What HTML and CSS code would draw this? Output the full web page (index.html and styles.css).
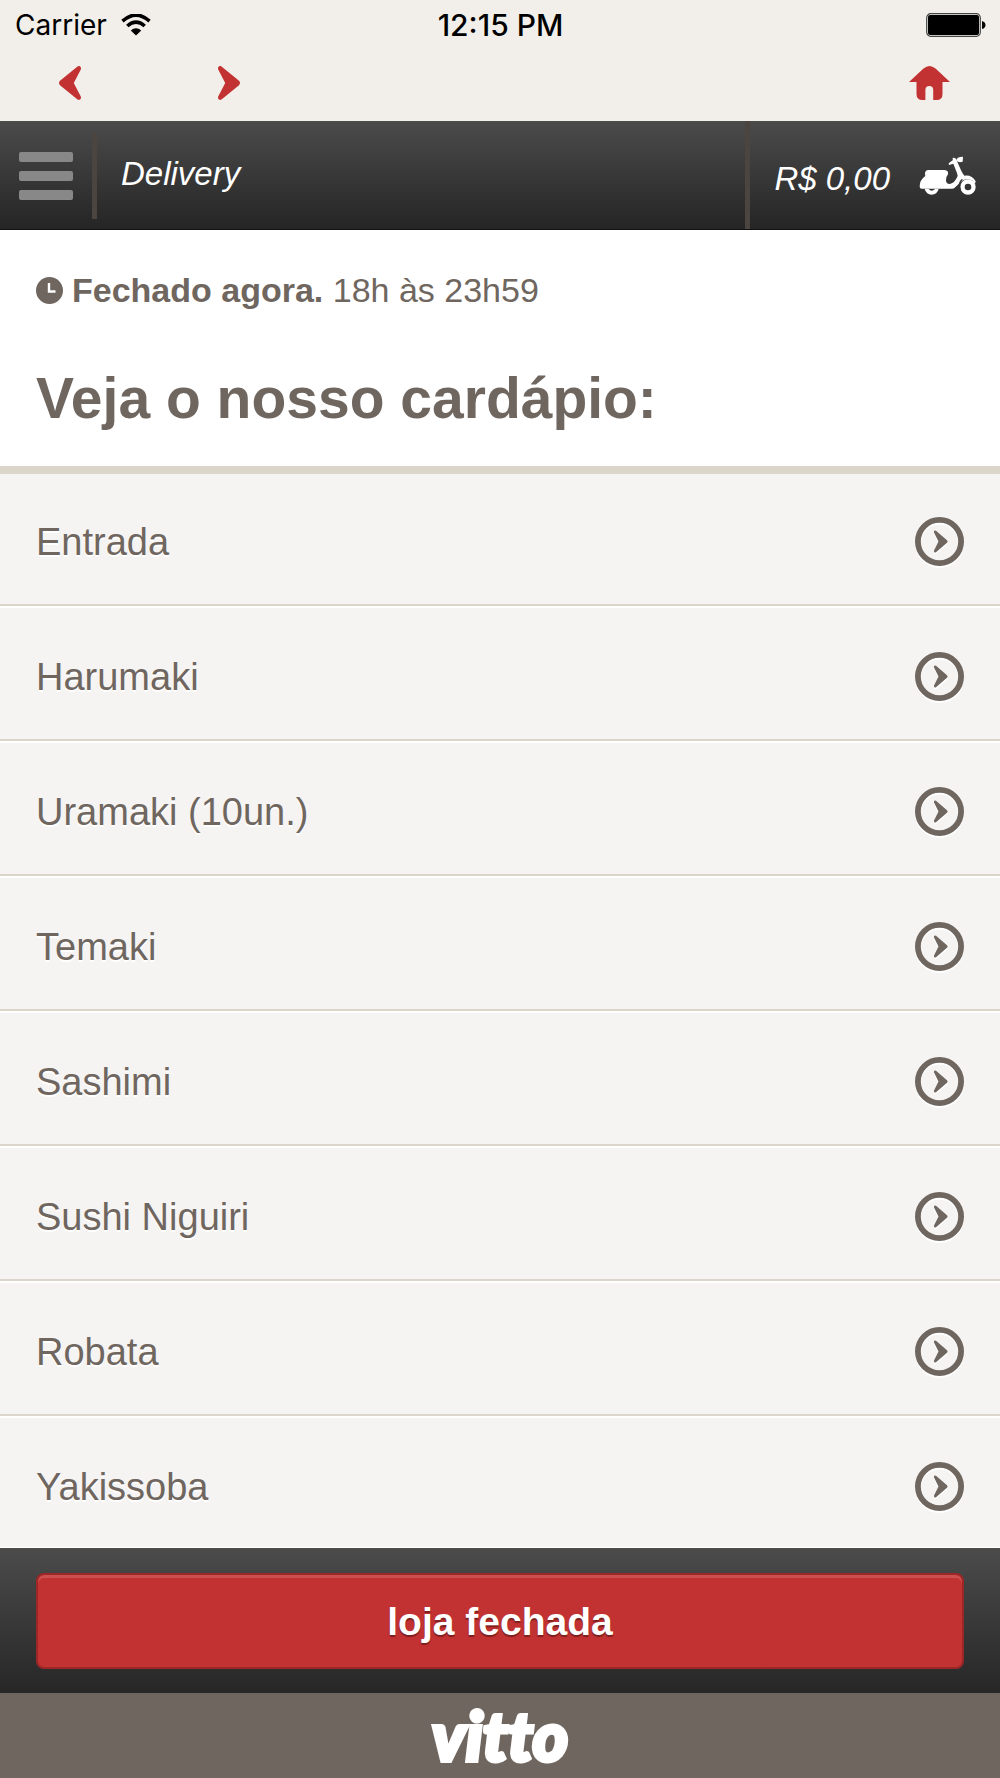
FILE: index.html
```html
<!DOCTYPE html>
<html lang="pt-BR">
<head>
  <meta charset="UTF-8">
  <meta name="viewport" content="width=device-width, initial-scale=1.0">
  <title>Delivery</title>
  <link rel="stylesheet" href="styles.css">
</head>
<body>

<!-- shared shapes -->
<svg class="sprite" aria-hidden="true">
  <symbol id="go" viewBox="0 0 49 49">
    <circle cx="24.5" cy="24.5" r="21.6" fill="none" stroke="currentColor" stroke-width="5.8"/>
    <path d="M19 15.500Q18.500 12.800 21 13.800L32 23.2Q33.300 24.5 32 25.8L21 35.200Q18.500 36.200 19 33.500L23.500 24.5Z" fill="currentColor"/>
  </symbol>
  <symbol id="arrow" viewBox="0 0 22 34">
    <path d="M.2 3.500C-.5 1 1.200-.8 3.500.6L21 14.800Q23 17 21 19.200L3.500 33.400C1.200 34.800-.5 33 .2 30.500L7.200 17Z" fill="currentColor"/>
  </symbol>
</svg>

<div class="status-bar">
  <div class="carrier">
    <span>Carrier</span>
    <svg width="30" height="22" viewBox="0 0 30 22">
      <path d="M1.5 7.2Q15-5 28.5 7.2" fill="none" stroke="#000" stroke-width="3.6"/>
      <path d="M6.3 12Q15 4.4 23.7 12" fill="none" stroke="#000" stroke-width="3.6"/>
      <path d="M15 21.5L9.8 16.4Q15 12 20.2 16.4Z"/>
    </svg>
  </div>
  <time class="clock">12:15 PM</time>
  <svg class="battery" width="60" height="24" viewBox="0 0 60 24">
    <rect x=".7" y=".7" width="53.6" height="22.6" rx="4" fill="none" stroke="#444" stroke-width="1.2"/>
    <rect x="2" y="2" width="51" height="20" rx="2"/>
    <path d="M56 8Q59.500 9 59.500 12T56 16Z"/>
  </svg>
</div>

<nav class="nav-bar">
  <button class="nav-button back" aria-label="Voltar"><svg width="22" height="34"><use href="#arrow"/></svg></button>
  <button class="nav-button next" aria-label="Avançar"><svg width="22" height="34"><use href="#arrow"/></svg></button>
  <button class="nav-button home" aria-label="Início">
    <svg width="41" height="34" viewBox="0 0 41 34">
      <path d="M0 16L14.500 2.500Q20.500-2.500 26.500 2.500L41 16H33.500V28Q33.500 34 27.500 34H24.200V24Q24.200 20 20.300 20T16.400 24V34H13.500Q7.500 34 7.500 28V16Z" fill="currentColor"/>
    </svg>
  </button>
</nav>

<header class="top-bar">
  <button class="menu-button" aria-label="Menu"><span></span><span></span><span></span></button>
  <h1 class="page-name">Delivery</h1>
  <a href="#" class="cart">
    <span>R$ 0,00</span>
    <svg width="57" height="39" viewBox="0 0 171 117" fill="currentColor">
      <path d="M2 91Q2 72 19 60Q15 45 26 42H77Q89 43 87 55Q82 60 81 73Q81 84 92 84Q105 82 113 66Q118 59 114 51L103 23L90 27Q87 23 91 20L102 12Q98 4 105 5L111 8L126 43Q129 50 136 59Q158 55 170 76L168 83L159 73Q139 65 128 76L107 95Q104 98 99 98H7Q2 98 2 91Z"/>
      <path d="M112 14Q112 2 132 2L131 17Q119 21 112 14Z"/>
      <path fill-rule="evenodd" d="M147 70A23 23 0 1 0 147 116A23 23 0 1 0 147 70ZM147 83A10 10 0 1 1 147 103A10 10 0 1 1 147 83Z"/>
      <path d="M17 99H29Q38 109 48 99H59Q54 116 38 116T17 99Z"/>
      <path d="M124 101Q116 82 130 70" fill="none" stroke="#333" stroke-width="4"/>
    </svg>
  </a>
</header>

<main>
  <section class="intro">
    <p class="hours">
      <svg width="27" height="27" viewBox="0 0 27 27">
        <circle cx="13.500" cy="13.500" r="13.500" fill="currentColor"/>
        <path d="M13 6V14.500H19.500" fill="none" stroke="#fff" stroke-width="2.400"/>
      </svg>
      <span><strong>Fechado agora.</strong> 18h às 23h59</span>
    </p>
    <h2>Veja o nosso cardápio:</h2>
  </section>

  <ul class="menu-list">
    <li><a href="#">Entrada <svg width="49" height="49"><use href="#go"/></svg></a></li>
    <li><a href="#">Harumaki <svg width="49" height="49"><use href="#go"/></svg></a></li>
    <li><a href="#">Uramaki (10un.) <svg width="49" height="49"><use href="#go"/></svg></a></li>
    <li><a href="#">Temaki <svg width="49" height="49"><use href="#go"/></svg></a></li>
    <li><a href="#">Sashimi <svg width="49" height="49"><use href="#go"/></svg></a></li>
    <li><a href="#">Sushi Niguiri <svg width="49" height="49"><use href="#go"/></svg></a></li>
    <li><a href="#">Robata <svg width="49" height="49"><use href="#go"/></svg></a></li>
    <li><a href="#">Yakissoba <svg width="49" height="49"><use href="#go"/></svg></a></li>
  </ul>
</main>

<div class="action-bar">
  <button class="store-button">loja fechada</button>
</div>

<footer class="footer">
  <a href="#" class="logo">vitto</a>
</footer>

</body>
</html>
```
FILE: styles.css
```css
* {
  box-sizing: border-box;
}

body {
  margin: 0;
  min-height: 100vh;
  display: flex;
  flex-direction: column;
  font-family: "Liberation Sans", Arial, sans-serif;
  color: #6f6660;
  background: #fff;
}

a {
  color: inherit;
  text-decoration: none;
}

button {
  border: none;
  padding: 0;
  background: none;
  font-family: inherit;
  cursor: pointer;
}

svg {
  display: block;
  flex: none;
}

.sprite {
  position: absolute;
  width: 0;
  height: 0;
}

/* status bar */
.status-bar {
  display: grid;
  grid-template-columns: 1fr auto 1fr;
  align-items: center;
  height: 50px;
  padding: 0 14px 0 15px;
  background: #f2efea;
  color: #000;
  font-family: Inter, sans-serif;
  font-size: 28px;
}

.carrier {
  display: flex;
  align-items: center;
  gap: 14px;
}

.clock {
  font-size: 30px;
  font-weight: 500;
}

.battery {
  justify-self: end;
}

/* back, next, home */
.nav-bar {
  display: flex;
  align-items: center;
  height: 71px;
  padding: 0 50px 6px 59px;
  background: #f2efea;
}

.nav-button {
  color: #c33232;
}

.back svg {
  transform: rotate(180deg);
}

.next {
  margin-left: 137px;
}

.home {
  margin-left: auto;
}

/* dark header */
.top-bar {
  display: flex;
  align-items: center;
  height: 109px;
  padding: 0 24px 0 19px;
  background: linear-gradient(#4b4b4b, #252525);
  border-bottom: 1px solid #111;
  color: #fff;
  font-size: 33px;
  font-style: italic;
}

.menu-button {
  display: flex;
  flex-direction: column;
  gap: 9px;
  width: 54px;
  padding-top: 2px;
}

.menu-button span {
  height: 10px;
  border-radius: 2px;
  background: #888;
}

.page-name {
  flex: 1;
  height: 86px;
  margin: 2px 0 0 19px;
  padding-left: 24px;
  border-left: 5px solid #4b4541;
  font-size: 33px;
  font-weight: normal;
  line-height: 82px;
}

.cart {
  display: flex;
  align-items: center;
  gap: 29px;
  height: 100%;
  padding-left: 24px;
  border-left: 5px solid #4b4541;
}

.cart span {
  padding-top: 8px;
}

/* opening hours and title */
.intro {
  padding: 40px 36px 36px;
  border-bottom: 8px solid #dbd5ca;
  background: #fff;
}

.hours {
  display: flex;
  align-items: center;
  gap: 9px;
  margin: 0;
  font-size: 34px;
  line-height: 40px;
}

.intro h2 {
  margin: 56px 0 0;
  font-size: 57px;
  line-height: 64px;
}

/* categories */
main {
  flex: 1;
  background: #f5f4f2;
}

.menu-list {
  margin: 0;
  padding: 0;
  list-style: none;
}

.menu-list a {
  display: flex;
  align-items: center;
  justify-content: space-between;
  padding: 44px 36px 38px;
  border-top: 2px solid #fff;
  border-bottom: 2px solid #dbd5ca;
  font-size: 38px;
  line-height: 48px;
  text-shadow: 0 2px 0 #fff;
}

.menu-list li:first-child a {
  padding-top: 43px;
  border-top: none;
}

.menu-list li:last-child a {
  padding-bottom: 36px;
  border-bottom: 1px solid #fff;
}

.menu-list svg {
  filter: drop-shadow(0 2px 0 #fff);
}

/* store status button */
.action-bar {
  padding: 25px 36px 24px;
  background: linear-gradient(#4b4b4b, #272727);
}

.store-button {
  display: block;
  width: 100%;
  height: 96px;
  padding-top: 2px;
  border: 2px solid #9d2626;
  border-radius: 8px;
  background: #c33232;
  box-shadow: inset 0 3px 0 #cd5050;
  color: #fff;
  font-size: 39px;
  font-weight: bold;
  text-shadow: 0 2px 1px #7d1f1f;
}

.footer {
  display: flex;
  justify-content: center;
  height: 85px;
  background: #6f6660;
}

.logo {
  color: #fff;
  font-family: Lato, sans-serif;
  font-size: 68px;
  font-style: italic;
  font-weight: 900;
  font-variant-ligatures: none;
  line-height: 84px;
  -webkit-text-stroke: 4px #fff;
}
```
